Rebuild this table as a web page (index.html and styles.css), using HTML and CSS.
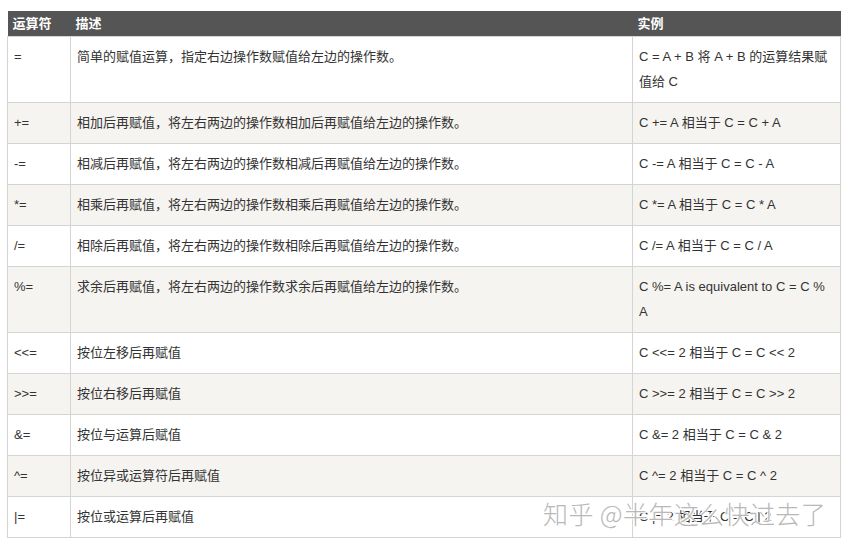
FILE: index.html
```html
<!DOCTYPE html>
<html lang="zh">
<head>
<meta charset="utf-8">
<title>赋值运算符</title>
<link rel="stylesheet" href="styles.css">
</head>
<body>
<div class="page">
  <table class="ops">
    <thead>
      <tr><th class="c1">运算符</th><th class="c2">描述</th><th class="c3">实例</th></tr>
    </thead>
    <tbody>
      <tr><td>=</td><td>简单的赋值运算，指定右边操作数赋值给左边的操作数。</td><td>C = A + B 将 A + B 的运算结果赋值给 C</td></tr>
      <tr><td>+=</td><td>相加后再赋值，将左右两边的操作数相加后再赋值给左边的操作数。</td><td>C += A 相当于 C = C + A</td></tr>
      <tr><td>-=</td><td>相减后再赋值，将左右两边的操作数相减后再赋值给左边的操作数。</td><td>C -= A 相当于 C = C - A</td></tr>
      <tr><td>*=</td><td>相乘后再赋值，将左右两边的操作数相乘后再赋值给左边的操作数。</td><td>C *= A 相当于 C = C * A</td></tr>
      <tr><td>/=</td><td>相除后再赋值，将左右两边的操作数相除后再赋值给左边的操作数。</td><td>C /= A 相当于 C = C / A</td></tr>
      <tr><td>%=</td><td>求余后再赋值，将左右两边的操作数求余后再赋值给左边的操作数。</td><td>C %= A is equivalent to C = C % A</td></tr>
      <tr><td>&lt;&lt;=</td><td>按位左移后再赋值</td><td>C &lt;&lt;= 2 相当于 C = C &lt;&lt; 2</td></tr>
      <tr><td>&gt;&gt;=</td><td>按位右移后再赋值</td><td>C &gt;&gt;= 2 相当于 C = C &gt;&gt; 2</td></tr>
      <tr><td>&amp;=</td><td>按位与运算后赋值</td><td>C &amp;= 2 相当于 C = C &amp; 2</td></tr>
      <tr><td>^=</td><td>按位异或运算符后再赋值</td><td>C ^= 2 相当于 C = C ^ 2</td></tr>
      <tr><td>|=</td><td>按位或运算后再赋值</td><td>C |= 2 相当于 C = C | 2</td></tr>
    </tbody>
  </table>
  <div class="watermark">知乎 @半年这么快过去了</div>
</div>
</body>
</html>
```

FILE: styles.css
```css
html, body {
  margin: 0;
  padding: 0;
  background: #ffffff;
}
.page {
  position: relative;
  padding: 11px 8px 0 7px;
  font-family: "Liberation Sans", "Noto Sans CJK SC", sans-serif;
  font-size: 13px;
  color: #333333;
}
.ops {
  width: 834px;
  border-collapse: collapse;
  table-layout: fixed;
}
.ops th {
  background: #555555;
  color: #ffffff;
  font-weight: bold;
  text-align: left;
  height: 25px;
  line-height: 25px;
  padding: 0 5px;
  font-size: 13px;
}
.ops th.c1 { width: 53px; }
.ops th.c2 { width: 552px; }
.ops th.c3 { width: auto; }
.ops td {
  border: 1px solid #d4d4d4;
  padding: 7px 6px 8px;
  line-height: 25px;
  vertical-align: top;
}
.ops tbody tr:nth-child(even) td {
  background: #f6f4f0;
}
.watermark {
  position: absolute;
  left: 543px;
  top: 497px;
  font-family: "Noto Sans CJK SC", sans-serif;
  font-weight: 300;
  font-size: 25px;
  line-height: 32px;
  color: #b8b8b8;
  letter-spacing: 0.4px;
  text-shadow: 0 0 1px #ffffff, 1px 1px 0 #ffffff, -1px -1px 0 #ffffff;
  white-space: nowrap;
}
```
